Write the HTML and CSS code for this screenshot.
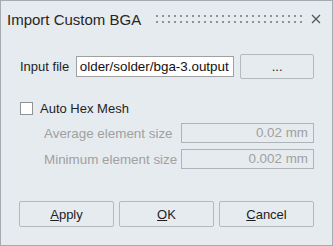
FILE: index.html
```html
<!DOCTYPE html>
<html lang="en">
<head>
    <meta charset="UTF-8">
    <meta name="viewport" content="width=device-width, initial-scale=1.0">
    <title>Import Custom BGA</title>
    <link rel="stylesheet" href="styles.css">
</head>
<body>

    <div class="dialog">
        <div class="titlebar">
            <span class="title">Import Custom BGA</span>
            <span class="grip"></span>
            <svg class="close" width="10" height="10" viewBox="0 0 10 10">
                <path d="M1 1 L9 9 M9 1 L1 9" stroke="#555" stroke-width="1.2" fill="none"/>
            </svg>
        </div>

        <div class="content">
            <div class="file-row">
                <span class="label">Input file</span>
                <div class="path">older/solder/bga-3.output</div>
                <button class="browse">...</button>
            </div>

            <label class="check-row">
                <span class="checkbox"></span>
                <span>Auto Hex Mesh</span>
            </label>

            <div class="field-row">
                <span class="field-label">Average element size</span>
                <div class="field">0.02 mm</div>
            </div>
            <div class="field-row">
                <span class="field-label">Minimum element size</span>
                <div class="field">0.002 mm</div>
            </div>
        </div>

        <div class="buttons">
            <button><u>A</u>pply</button>
            <button><u>O</u>K</button>
            <button><u>C</u>ancel</button>
        </div>
    </div>

</body>
</html>
```

FILE: styles.css
```css
body {
    margin: 0;
    font-family: "Liberation Sans", Arial, sans-serif;
    font-size: 13px;
    color: #1e1e1e;
}
.dialog {
    width: 333px;
    height: 246px;
    box-sizing: border-box;
    border: 1px solid #a5abb0;
    background: #e6ebef;
    display: flex;
    flex-direction: column;
}
.titlebar {
    height: 36px;
    display: flex;
    align-items: center;
    padding: 0 11px 0 6px;
}
.title {
    font-size: 15px;
    color: #262626;
}
.grip {
    flex: 1;
    height: 8px;
    margin: 0 9px 0 15px;
    background-image: radial-gradient(circle, #8e9296 1px, transparent 1.2px);
    background-size: 6px 6px;
    background-position: -2px -2px;
}
.close {
    display: block;
}
.content {
    padding: 0 18px 0 19px;
}
.file-row {
    display: flex;
    align-items: center;
    margin-top: 17px;
    height: 25px;
}
.label {
    width: 56px;
}
.path {
    width: 151px;
    height: 19px;
    line-height: 19px;
    padding: 0 3px;
    border: 1px solid #a0a0a0;
    background: white;
    color: #111;
    font-size: 13.4px;
    white-space: nowrap;
    overflow: hidden;
}
.browse {
    margin-left: 6px;
    width: 74px;
    height: 25px;
}
button {
    font-family: inherit;
    font-size: 13px;
    color: #1e1e1e;
    background: #e6ebef;
    border: 1px solid #b4b9be;
    border-radius: 2px;
    padding: 0;
}
.check-row {
    display: flex;
    align-items: center;
    gap: 7px;
    margin-top: 23px;
    height: 13px;
}
.checkbox {
    width: 11px;
    height: 11px;
    border: 1px solid #8e9398;
    background: white;
}
.field-row {
    display: flex;
    align-items: center;
    height: 20px;
    margin-top: 6px;
    color: #a0a0a0;
    font-size: 13.4px;
}
.check-row + .field-row {
    margin-top: 8px;
}
.field-label {
    width: 137px;
    padding-left: 24px;
}
.field {
    width: 126px;
    height: 18px;
    line-height: 18px;
    padding-right: 5px;
    border: 1px solid #b0b4b8;
    text-align: right;
}
.buttons {
    display: flex;
    gap: 5px;
    padding: 0 18px 0 18px;
    margin-top: auto;
    margin-bottom: 18px;
}
.buttons button {
    width: 95px;
    height: 26px;
}
```
